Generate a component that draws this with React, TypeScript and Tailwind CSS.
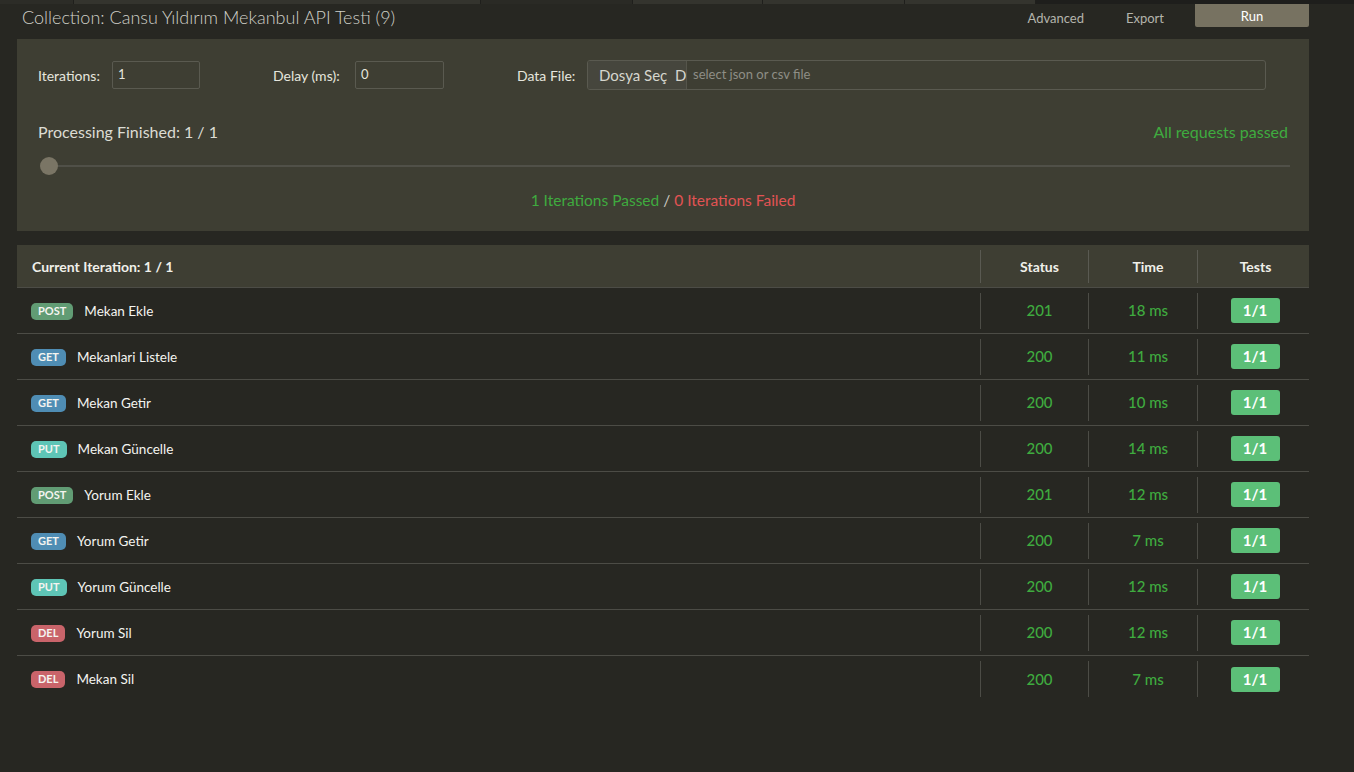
import React from 'react';

type Method = 'POST' | 'GET' | 'PUT' | 'DEL';

interface Req {
  method: Method;
  name: string;
  status: number;
  time: number;
}

const requests: Req[] = [
  { method: 'POST', name: 'Mekan Ekle', status: 201, time: 18 },
  { method: 'GET', name: 'Mekanlari Listele', status: 200, time: 11 },
  { method: 'GET', name: 'Mekan Getir', status: 200, time: 10 },
  { method: 'PUT', name: 'Mekan Güncelle', status: 200, time: 14 },
  { method: 'POST', name: 'Yorum Ekle', status: 201, time: 12 },
  { method: 'GET', name: 'Yorum Getir', status: 200, time: 7 },
  { method: 'PUT', name: 'Yorum Güncelle', status: 200, time: 12 },
  { method: 'DEL', name: 'Yorum Sil', status: 200, time: 12 },
  { method: 'DEL', name: 'Mekan Sil', status: 200, time: 7 },
];

const badgeClass: Record<Method, string> = {
  POST: 'bg-[#619c74]',
  GET: 'bg-[#4f8db4]',
  PUT: 'bg-[#5ec5b6]',
  DEL: 'bg-[#c9646a]',
};

function TopStrip() {
  return (
    <div className="flex h-[4px] gap-px bg-[#1f1f1c]">
      <div className="w-[73px] bg-[#2c2c27]" />
      <div className="w-[406px] bg-[#34342e]" />
      <div className="w-[151px] bg-[#2a2a25]" />
      <div className="w-[129px] bg-[#34342e]" />
      <div className="w-[141px] bg-[#34342e]" />
      <div className="w-[130px] bg-[#34342e]" />
      <div className="flex-1 bg-[#1e1e1c]" />
    </div>
  );
}

function Field({ label, value, labelW, inputW }: { label: string; value: string; labelW: string; inputW: string }) {
  return (
    <div className="flex items-center">
      <span className={`${labelW} text-[14px] text-[#e6e6de]`}>{label}</span>
      <div
        className={`${inputW} h-[28px] flex items-center pl-[5px] rounded-[2px] border border-[#5a5a50] text-[13px] text-[#e6e6de]`}
      >
        {value}
      </div>
    </div>
  );
}

export default function App() {
  return (
    <div className="min-h-screen w-full bg-[#272722] font-['Lato',sans-serif] text-[#e6e6de]">
      <TopStrip />

      <div className="flex h-[35px] pl-[22px]">
        <div className="flex-1 text-[18px] font-light text-[#d0d0c8]">
          Collection: Cansu Yıldırım Mekanbul API Testi (9)
        </div>
        <div className="flex items-start">
          <span className="mt-[5px] text-[13px] text-[#b4b4ac]">Advanced</span>
          <span className="mt-[5px] ml-[42px] text-[13px] text-[#b4b4ac]">Export</span>
          <button className="ml-[31px] mr-[45px] h-[23px] w-[114px] rounded-b-[2px] bg-[#777261] text-[13px] leading-[22px] text-white">
            Run
          </button>
        </div>
      </div>

      <div className="ml-[17px] w-[1292px]">
        <div className="h-[192px] bg-[#3e3e33] px-[21px] pt-[21px]">
          <div className="flex items-center">
            <Field label="Iterations:" value="1" labelW="w-[74px]" inputW="w-[88px]" />
            <div className="ml-[73px]">
              <Field label="Delay (ms):" value="0" labelW="w-[82px]" inputW="w-[89px]" />
            </div>
            <div className="ml-[73px] flex items-center">
              <span className="w-[70px] text-[14px] text-[#e6e6de]">Data File:</span>
              <div className="flex h-[30px] w-[679px] rounded-[3px] border border-[#5a5a50] overflow-hidden">
                <div className="flex w-[98px] shrink-0 items-center overflow-hidden bg-[#46463d] pl-[11px] text-[15px] text-[#d6d6ce] whitespace-nowrap">
                  Dosya Seç&nbsp;&nbsp;Dosya
                </div>
                <div className="flex flex-1 items-center border-l border-[#55554b] pl-[6px] text-[13px] text-[#8e8e86]">
                  select json or csv file
                </div>
              </div>
            </div>
          </div>

          <div className="mt-[30px] flex items-center justify-between">
            <span className="text-[16px] text-[#dcdcd4]">Processing Finished: 1 / 1</span>
            <span className="text-[16px] text-[#3fab3f]">All requests passed</span>
          </div>

          <div className="relative mt-[13px] flex h-[18px] items-center">
            <div className="ml-[11px] mr-[-2px] h-[2px] flex-1 bg-[#505048]" />
            <div className="absolute left-[2px] top-0 h-[18px] w-[18px] rounded-full bg-[#7a7565]" />
          </div>

          <div className="mt-[14px] text-center text-[15.5px]">
            <span className="text-[#3fab3f]">1 Iterations Passed</span>
            <span className="text-[#c8c8c0]"> / </span>
            <span className="text-[#e25353]">0 Iterations Failed</span>
          </div>
        </div>

        <div className="mt-[14px]">
          <div className="flex h-[43px] items-center border-b border-[#4c4c46] bg-[#3e3e33] text-[14px] font-bold text-[#f0f0ea]">
            <div className="flex-1 pl-[15px]">Current Iteration: 1 / 1</div>
            <div className="flex h-[33px] w-[108px] items-center justify-center border-l border-[#5a5a52] pl-[10px]">Status</div>
            <div className="flex h-[33px] w-[109px] items-center justify-center border-l border-[#5a5a52] pl-[10px]">Time</div>
            <div className="flex h-[33px] w-[112px] items-center justify-center border-l border-[#5a5a52] pl-[4px]">Tests</div>
          </div>

          {requests.map((r, i) => (
            <div
              key={i}
              className={`flex h-[46px] items-center ${i < requests.length - 1 ? 'border-b border-[#4c4c46]' : ''}`}
            >
              <div className="flex flex-1 items-center gap-[11px] pl-[14px] pt-[1px]">
                <span
                  className={`${badgeClass[r.method]} flex h-[17px] items-center rounded-[5px] px-[7px] text-[11px] font-bold text-[#f4f4f0]`}
                >
                  {r.method}
                </span>
                <span className="text-[13.5px] text-[#f4f4f0]">{r.name}</span>
              </div>
              <div className="flex h-[36px] w-[108px] items-center justify-center border-l border-[#4c4c46] pl-[10px] text-[15px] font-medium text-[#3fab3f]">
                {r.status}
              </div>
              <div className="flex h-[36px] w-[109px] items-center justify-center border-l border-[#4c4c46] pl-[10px] text-[15px] font-medium text-[#3fab3f]">
                {r.time} ms
              </div>
              <div className="flex h-[36px] w-[112px] items-center justify-center border-l border-[#4c4c46] pl-[3px]">
                <span className="flex h-[25px] w-[49px] items-center justify-center rounded-[3px] bg-[#5cbf78] text-[15px] font-bold text-white">
                  1/1
                </span>
              </div>
            </div>
          ))}
        </div>
      </div>
    </div>
  );
}
